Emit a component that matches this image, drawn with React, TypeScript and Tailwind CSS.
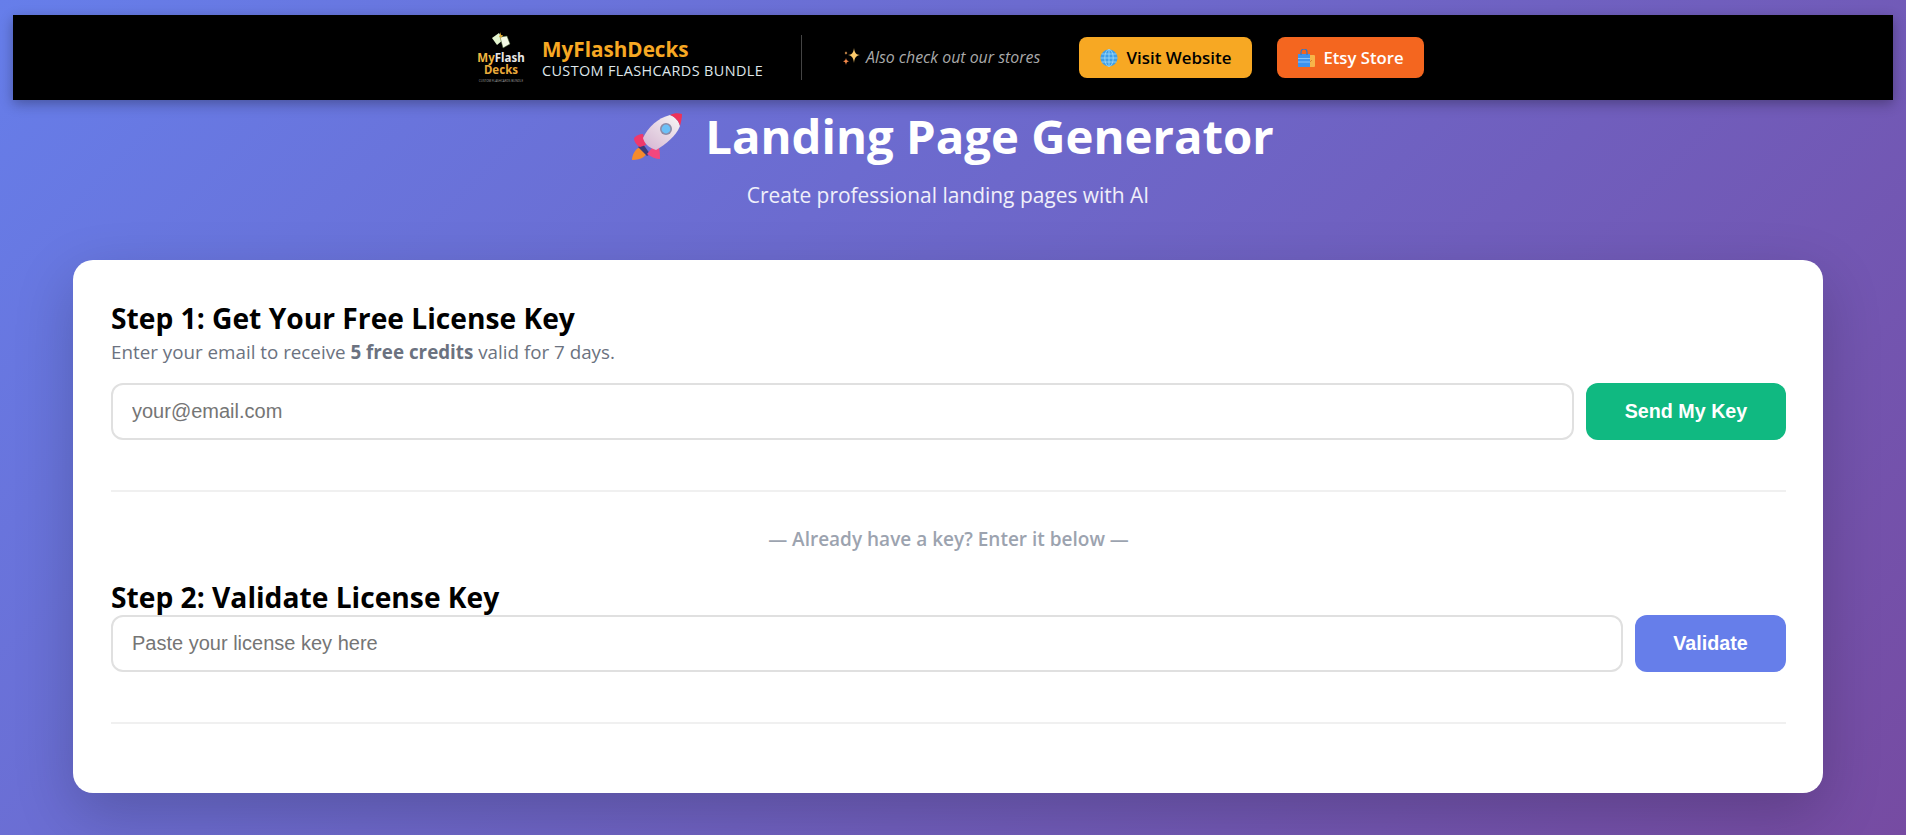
const sans = "font-['Open_Sans','Noto_Sans',sans-serif]";

const Rocket = () => (
	<svg viewBox="0 0 50 48" className="w-[50px] h-[48px] shrink-0">
		<defs>
			<linearGradient id="rocketBody" x1="0.9" y1="0.1" x2="0.2" y2="0.9">
				<stop offset="0" stopColor="#f4f0f2" />
				<stop offset="1" stopColor="#d9bdd6" />
			</linearGradient>
		</defs>
		<path d="M8 35c3 0 6 2 7 5-1 4-5 8-15 8 0-5 3-11 8-13z" fill="#f68b2c" />
		<path d="M11 32 18 42 15 44 6 35z" fill="#3c3a78" />
		<path d="M11 22C7 22 4 24 2 26c0 3 2 7 6 9l6-2z" fill="#f0386b" />
		<path d="M27 36c1 4 1 8 1 11-4 0-9-2-13-5l5-6z" fill="#f2477e" />
		<path d="M38 3C26 6 16 15 11 26c1 5 6 10 13 12C34 32 44 24 48 14 47 9 43 5 38 3z" fill="url(#rocketBody)" />
		<path d="M38 3c4-2 8-2 12-1 0 4-1 8-2 12-1-5-5-9-10-11z" fill="#f0335a" />
		<circle cx="34" cy="17" r="6" fill="#8d8ba6" />
		<circle cx="34" cy="17" r="4.4" fill="#6cc0f7" />
	</svg>
);

const Globe = () => (
	<svg viewBox="0 0 18 18" className="w-[18px] h-[18px] shrink-0">
		<circle cx="9" cy="9" r="8.5" fill="#3f9fe8" />
		<g fill="none" stroke="#a5dcf7" strokeWidth="0.8">
			<ellipse cx="9" cy="9" rx="4.200" ry="8.500" />
			<path d="M9 .5v17M1.500 5h15M.5 9h17M1.500 13h15" />
		</g>
	</svg>
);

const Bags = () => (
	<svg viewBox="0 0 18 18" className="w-[18px] h-[18px] shrink-0">
		<rect x="9" y="6" width="9" height="12" rx="1" fill="#f7b54a" />
		<path d="m12 14 3-3" stroke="#d9822b" strokeWidth="1" />
		<path d="M1 5h12v13H1z" fill="#3d93ee" />
		<path d="M4 6V3a3 3 0 0 1 6 0v3" fill="none" stroke="#2f76cc" strokeWidth="1.200" />
		<path d="M1 9h12v1H1zM1 12.500h12v1H1z" fill="#8ac4f7" />
	</svg>
);

const Sparkles = () => (
	<svg viewBox="0 0 18 18" className="w-[18px] h-[18px] shrink-0">
		<path d="M12 0c.7 5 2 6.500 6 7-4 .8-5.300 2.400-6 8-.7-5.600-2-7.200-6-8 4-.5 5.300-2 6-7z" fill="#fbc96a" />
		<path d="M4 10c.4 2 1 2.800 3 3.200-2 .4-2.600 1.200-3 3.800-.4-2.600-1-3.400-3-3.800 2-.4 2.600-1.200 3-3.200z" fill="#f5894a" />
		<path d="M4 3c.2 1.200.5 1.600 1.600 1.900C4.500 5.200 4.200 5.600 4 7c-.2-1.400-.5-1.800-1.600-2.100C3.500 4.600 3.800 4.200 4 3z" fill="#f7a85a" />
	</svg>
);

const Logo = () => (
	<div className="w-[46px] h-[51px] flex flex-col items-center shrink-0">
		<svg viewBox="0 0 20 17" className="w-[20px] h-[17px] shrink-0">
			<path d="M1 6 8 1l4 7-6 5z" fill="#e4f5cf" />
			<path d="M9 5l7-1 3 8-7 4z" fill="#f4fbe6" stroke="#3c5a2a" strokeWidth="0.5" />
			<path d="M10 0 8 5h2l-1 3 3-5h-2z" fill="#d9a52e" />
		</svg>
		<div className="mt-[3px] text-[11.500px] leading-[12px] font-bold font-['Noto_Sans',sans-serif] whitespace-nowrap">
			<span className="text-[#f0b840]">My</span>
			<span className="text-[#e8e8e8]">Flash</span>
		</div>
		<div className="text-[11.500px] leading-[12px] font-bold font-['Noto_Sans',sans-serif] text-[#e9a93a]">Decks</div>
		<div className="mt-[3px] text-[3px] leading-[4px] text-[#999] whitespace-nowrap font-['Noto_Sans',sans-serif]">
			CUSTOM FLASHCARDS BUNDLE
		</div>
	</div>
);

const Banner = () => (
	<div className={`${sans} ml-[13px] mt-[15px] w-[1880px] h-[85px] pr-[4px] bg-black shadow-[0_4px_12px_rgba(0,0,0,0.3)] flex items-center justify-center relative z-10`}>
		<Logo />
		<div className="ml-[18px] flex flex-col w-[259px]">
			<span className="text-[20.7px] leading-[26px] font-bold text-[#f7a823]">MyFlashDecks</span>
			<span className="text-[14.4px] leading-[18px] text-[#dfe6ea] tracking-[0.4px] whitespace-nowrap">CUSTOM FLASHCARDS BUNDLE</span>
		</div>
		<div className="w-px h-[45px] bg-[#444]" />
		<div className="ml-[40px] w-[237px] flex items-center gap-[6px]">
			<Sparkles />
			<span className="text-[15.900px] italic text-[#aaa] whitespace-nowrap">Also check out our stores</span>
		</div>
		<a className="w-[173px] h-[41px] rounded-[8px] bg-[#f7a823] text-black flex items-center justify-center gap-[9px] text-[16.900px] font-semibold">
			<Globe />
			<span>Visit Website</span>
		</a>
		<a className="ml-[25px] w-[147px] h-[41px] rounded-[8px] bg-[#f4661f] text-white flex items-center justify-center gap-[8px] text-[16.700px] font-semibold">
			<Bags />
			<span>Etsy Store</span>
		</a>
	</div>
);

const KeyRow = ({ placeholder, button, width, color }: { placeholder: string; button: string; width: string; color: string }) => (
	<div className="flex gap-[12px]">
		<input
			type="text"
			placeholder={placeholder}
			className="flex-1 min-w-0 h-[57px] px-[19px] border-2 border-[#e0e0e0] rounded-[12px] bg-white text-[20px] font-['Liberation_Sans',sans-serif] placeholder:text-[#757575] outline-none"
		/>
		<button className={`${width} ${color} h-[57px] rounded-[12px] text-white text-[19.700px] font-bold font-['Liberation_Sans',sans-serif]`}>
			{button}
		</button>
	</div>
);

export default function App() {
	return (
		<div className="min-h-screen h-[835px] overflow-hidden bg-[linear-gradient(135deg,#667eea_0%,#764ba2_100%)]">
			<Banner />
			<div className={`${sans} ml-[73px] w-[1750px]`}>
				<div className="h-[160px] flex flex-col items-center text-white">
					<h1 className="mt-[3px] pl-[10px] flex items-center gap-[23px] text-[47.300px] leading-[65px] font-bold">
						<Rocket />
						Landing Page Generator
					</h1>
					<p className="mt-[14px] text-[20.950px] leading-[27px] text-white/90">Create professional landing pages with AI</p>
				</div>
				<div className="h-[533px] bg-white rounded-[20px] shadow-[0_20px_60px_rgba(0,0,0,0.2)] pl-[38px] pr-[37px] pt-[40px]">
					<h2 className="text-[28.200px] leading-[36px] font-bold text-black">Step 1: Get Your Free License Key</h2>
					<p className="mt-[4px] text-[18.800px] leading-[24px] text-[#6b7280]">
						Enter your email to receive <strong className="font-bold">5 free credits</strong> valid for 7 days.
					</p>
					<div className="mt-[19px]">
						<KeyRow placeholder="your@email.com" button="Send My Key" width="w-[200px]" color="bg-[#10b981]" />
					</div>
					<div className="mt-[50px] h-[2px] bg-[#f0f0f0]" />
					<p className="mt-[35px] text-center text-[19px] leading-[24px] font-semibold text-[#9ca3af]">— Already have a key? Enter it below —</p>
					<h2 className="mt-[28px] text-[28.200px] leading-[36px] font-bold text-black">Step 2: Validate License Key</h2>
					<KeyRow placeholder="Paste your license key here" button="Validate" width="w-[151px]" color="bg-[#667eea]" />
					<div className="mt-[50px] h-[2px] bg-[#f0f0f0]" />
				</div>
			</div>
		</div>
	);
}
